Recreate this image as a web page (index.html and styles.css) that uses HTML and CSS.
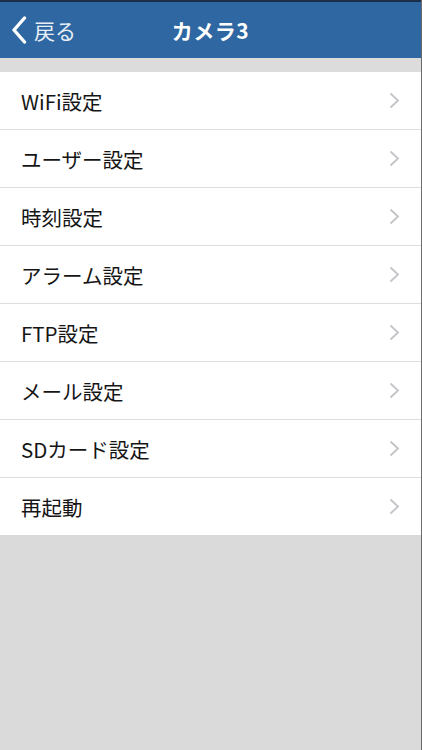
FILE: index.html
```html
<!DOCTYPE html>
<html lang="ja">
<head>
    <meta charset="utf-8">
    <title>カメラ3</title>
    <link rel="stylesheet" href="styles.css">
</head>
<body>
    <div class="screen">
        <div class="navbar">
            <a class="back" href="#">
                <svg class="back-icon" width="16" height="28" viewBox="0 0 16 28">
                    <path d="M13.5 2 L3 14 L13.5 26" fill="none" stroke="#ffffff" stroke-width="3.4" stroke-linecap="round" stroke-linejoin="round"/>
                </svg>
                <span>戻る</span>
            </a>
            <h1>カメラ3</h1>
        </div>
        <div class="spacer"></div>
        <ul class="menu">
            <li><span>WiFi設定</span><svg class="chevron" width="11" height="17" viewBox="0 0 11 17"><path d="M1.5 1.5 L9 8.5 L1.5 15.5" fill="none" stroke="#c4c4c8" stroke-width="1.8"/></svg></li>
            <li><span>ユーザー設定</span><svg class="chevron" width="11" height="17" viewBox="0 0 11 17"><path d="M1.5 1.5 L9 8.5 L1.5 15.5" fill="none" stroke="#c4c4c8" stroke-width="1.8"/></svg></li>
            <li><span>時刻設定</span><svg class="chevron" width="11" height="17" viewBox="0 0 11 17"><path d="M1.5 1.5 L9 8.5 L1.5 15.5" fill="none" stroke="#c4c4c8" stroke-width="1.8"/></svg></li>
            <li><span>アラーム設定</span><svg class="chevron" width="11" height="17" viewBox="0 0 11 17"><path d="M1.5 1.5 L9 8.5 L1.5 15.5" fill="none" stroke="#c4c4c8" stroke-width="1.8"/></svg></li>
            <li><span>FTP設定</span><svg class="chevron" width="11" height="17" viewBox="0 0 11 17"><path d="M1.5 1.5 L9 8.5 L1.5 15.5" fill="none" stroke="#c4c4c8" stroke-width="1.8"/></svg></li>
            <li><span>メール設定</span><svg class="chevron" width="11" height="17" viewBox="0 0 11 17"><path d="M1.5 1.5 L9 8.5 L1.5 15.5" fill="none" stroke="#c4c4c8" stroke-width="1.8"/></svg></li>
            <li><span>SDカード設定</span><svg class="chevron" width="11" height="17" viewBox="0 0 11 17"><path d="M1.5 1.5 L9 8.5 L1.5 15.5" fill="none" stroke="#c4c4c8" stroke-width="1.8"/></svg></li>
            <li><span>再起動</span><svg class="chevron" width="11" height="17" viewBox="0 0 11 17"><path d="M1.5 1.5 L9 8.5 L1.5 15.5" fill="none" stroke="#c4c4c8" stroke-width="1.8"/></svg></li>
        </ul>
    </div>
</body>
</html>
```

FILE: styles.css
```css
body {
    margin: 0;
    padding: 0;
    background: #dadada;
    font-family: "Noto Sans CJK JP", "Noto Sans", sans-serif;
}
.screen {
    width: 422px;
    height: 750px;
    background: #dadada;
    box-sizing: border-box;
    border-right: 1px solid #6b6b6b;
}
.navbar {
    height: 56px;
    background: #2e67a1;
    border-top: 2px solid #1c2f48;
    display: flex;
    align-items: center;
    justify-content: center;
    position: relative;
    color: #ffffff;
}
.navbar h1 {
    margin: 0;
    font-size: 21px;
    font-weight: bold;
    letter-spacing: 0.5px;
}
.back {
    position: absolute;
    left: 11px;
    top: 14px;
    display: flex;
    align-items: center;
    gap: 7px;
    color: #e8eef6;
    text-decoration: none;
    font-size: 21px;
    line-height: 28px;
}
.back-icon {
    display: block;
}
.spacer {
    height: 14px;
    background: #dcdcdc;
}
.menu {
    list-style: none;
    margin: 0;
    padding: 0;
    background: #ffffff;
}
.menu li {
    height: 57px;
    display: flex;
    align-items: center;
    justify-content: space-between;
    padding: 0 21px 0 21px;
    border-bottom: 1px solid #dedede;
    font-size: 20.5px;
    font-weight: normal;
    color: #151515;
}
.menu li:last-child {
    border-bottom: none;
}
.chevron {
    display: block;
}
```
